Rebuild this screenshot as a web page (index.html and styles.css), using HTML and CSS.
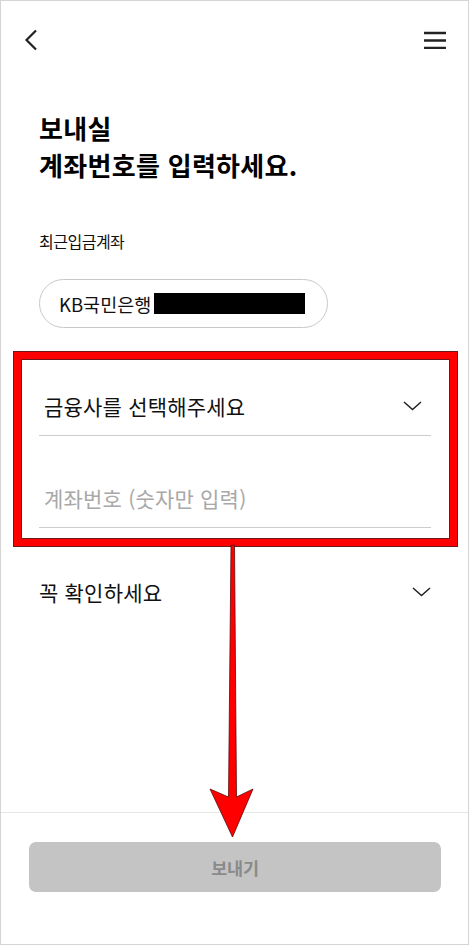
FILE: index.html
```html
<!DOCTYPE html>
<html lang="ko">
<head>
<meta charset="utf-8">
<link rel="stylesheet" href="styles.css">
</head>
<body>
<div class="frame">
  <header class="topbar">
    <svg class="icon-back" width="14" height="22" viewBox="0 0 14 22"><path d="M12 1.5 L2.5 11 L12 20.5" fill="none" stroke="#222" stroke-width="2.2"/></svg>
    <svg class="icon-menu" width="22" height="18" viewBox="0 0 22 18"><path d="M0 2h22M0 9.5h22M0 17h22" stroke="#222" stroke-width="2.4"/></svg>
  </header>
  <main class="content">
    <h1 class="title">보내실<br>계좌번호를 입력하세요.</h1>
    <div class="label">최근입금계좌</div>
    <div class="recent">
      <div class="pill"><span class="bank">KB국민은행</span><span class="mask"></span></div>
    </div>
    <div class="field select">
      <span class="field-text">금융사를 선택해주세요</span>
      <svg class="chev" width="19" height="10" viewBox="0 0 19 10"><path d="M1 1 L9.5 8.5 L18 1" fill="none" stroke="#222" stroke-width="1.5"/></svg>
    </div>
    <div class="field input">
      <span class="field-text placeholder">계좌번호 (숫자만 입력)</span>
    </div>
    <div class="notice">
      <span class="notice-text">꼭 확인하세요</span>
      <svg class="chev" width="19" height="10" viewBox="0 0 19 10"><path d="M1 1 L9.5 8.5 L18 1" fill="none" stroke="#222" stroke-width="1.5"/></svg>
    </div>
  </main>
  <footer class="footer">
    <button class="send">보내기</button>
  </footer>

  <div class="highlight"></div>
  <svg class="arrow" width="60" height="300" viewBox="205 540 60 300">
    <polygon points="231,545 234.5,545 236.5,797 253,789 232.5,837 210,789 228.5,797" fill="#ff0000" stroke="#5a0a0a" stroke-width="0.8" stroke-linejoin="miter"/>
  </svg>
</div>
</body>
</html>
```

FILE: styles.css
```css
* { box-sizing: border-box; }
html, body { margin: 0; padding: 0; background: #fff; }
body {
  font-family: "Noto Sans CJK KR", "Noto Sans", sans-serif;
  color: #111;
}
.frame {
  position: relative;
  width: 469px;
  height: 945px;
  border: 1px solid #d4d4d4;
  display: flex;
  flex-direction: column;
  overflow: hidden;
}
.topbar {
  height: 76px;
  flex: none;
  display: flex;
  align-items: center;
  justify-content: space-between;
  padding: 0 22px 0 23px;
}
.icon-back { display: block; margin-top: 1px; }
.icon-menu { display: block; margin-top: 2px; }

.content {
  flex: 1;
  padding: 0 37px 0 38px;
  display: flex;
  flex-direction: column;
}
.title {
  margin: 32px 0 0;
  font-size: 26px;
  line-height: 37px;
  font-weight: 700;
  letter-spacing: 0.3px;
  color: #000;
}
.label {
  margin-top: 47px;
  font-size: 16px;
  line-height: 22px;
  letter-spacing: -0.5px;
  color: #111;
}
.recent { margin-top: 27px; display: flex; }
.pill {
  height: 49px;
  width: 289px;
  border: 1px solid #c9c9c9;
  border-radius: 25px;
  display: flex;
  align-items: center;
  padding-left: 19px;
}
.bank {
  font-size: 18.5px;
  letter-spacing: 0;
  color: #111;
}
.mask {
  display: inline-block;
  width: 151px;
  height: 21px;
  background: #000;
  margin-left: 3px;
}
.field {
  height: 60px;
  border-bottom: 1px solid #cccccc;
  display: flex;
  align-items: center;
  justify-content: space-between;
  padding: 0 9px 0 5px;
}
.select { margin-top: 48px; }
.input { margin-top: 32px; }
.field-text {
  font-size: 21px;
  letter-spacing: 0.2px;
  color: #111;
}
.placeholder { color: #a8a8a8; }
.chev { display: block; }
.notice {
  margin-top: 44px;
  height: 40px;
  display: flex;
  align-items: center;
  justify-content: space-between;
}
.notice-text {
  font-size: 21px;
  letter-spacing: 0.2px;
  color: #111;
}
.footer {
  flex: none;
  border-top: 1px solid #e6e6e6;
  padding: 29px 27px 52px 28px;
}
.send {
  display: block;
  width: 100%;
  height: 50px;
  border: none;
  border-radius: 7px;
  background: #c4c4c4;
  color: #8a8a8a;
  font-family: "Noto Sans CJK KR", sans-serif;
  font-size: 17.5px;
  font-weight: 700;
  letter-spacing: -0.3px;
}

.highlight {
  position: absolute;
  left: 12px;
  top: 350px;
  width: 445px;
  height: 196px;
  border: 8px solid #ff0000;
  box-shadow: inset 0 0 0 1px #6b1a1a;
  outline: 1px solid #6b1a1a;
  outline-offset: -1px;
}
.arrow {
  position: absolute;
  left: 204px;
  top: 539px;
}
```
